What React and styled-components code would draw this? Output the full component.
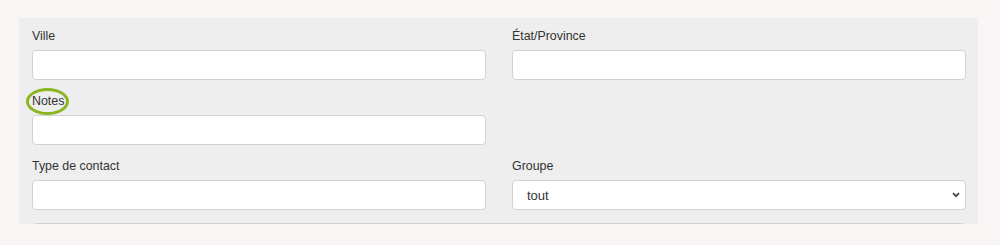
import React from 'react';
import styled, { createGlobalStyle } from 'styled-components';

const GlobalStyle = createGlobalStyle`
  html, body {
    margin: 0;
    padding: 0;
    background: #faf5f5;
    font-family: 'Liberation Sans', Arial, sans-serif;
  }
`;

const Page = styled.div`
  padding: 18px 22px 0 19px;
  height: 245px;
  box-sizing: border-box;
`;

const Panel = styled.div`
  background: #eeeeee;
  height: 206px;
  overflow: hidden;
  box-sizing: border-box;
  padding: 10px 12px 0 13px;
`;

const Grid = styled.div`
  display: grid;
  grid-template-columns: 454px 454px;
  column-gap: 26px;
`;

const Field = styled.div`
  display: flex;
  flex-direction: column;
  margin-bottom: 13px;
  grid-column: ${(p) => (p.$full ? '1 / -1' : 'auto')};
`;

const Label = styled.label`
  position: relative;
  align-self: flex-start;
  font-size: 12.4px;
  line-height: 17px;
  color: #333;
  margin-bottom: 5px;
`;

const Ring = styled.span`
  position: absolute;
  left: -6px;
  top: -5px;
  width: 43px;
  height: 27px;
  box-sizing: border-box;
  border: 3px solid #8db51f;
  border-radius: 50%;
  pointer-events: none;
`;

const Input = styled.input`
  box-sizing: border-box;
  height: 30px;
  width: 100%;
  border: 1px solid #d2d2d2;
  border-radius: 4px;
  background: #fff;
  padding: 0 14px;
  font-family: inherit;
  font-size: 13px;
  color: #333;
  outline: none;
`;

const SelectWrap = styled.div`
  position: relative;
`;

const Select = styled.select`
  box-sizing: border-box;
  appearance: none;
  height: 30px;
  width: 100%;
  border: 1px solid #d2d2d2;
  border-radius: 4px;
  background: #fff;
  padding: 0 14px;
  font-family: inherit;
  font-size: 13px;
  color: #333;
  outline: none;
`;

const Chevron = styled.svg`
  position: absolute;
  right: 6px;
  top: 12px;
  pointer-events: none;
`;

const Notes = styled.textarea`
  box-sizing: border-box;
  height: 60px;
  width: 100%;
  border: 1px solid #d2d2d2;
  border-radius: 4px;
  background: #fff;
  resize: none;
`;

export default function App() {
  return (
    <>
      <GlobalStyle />
      <Page>
        <Panel>
          <Grid>
            <Field>
              <Label>Ville</Label>
              <Input type="text" />
            </Field>
            <Field>
              <Label>État/Province</Label>
              <Input type="text" />
            </Field>
            <Field>
              <Label>
                Notes
                <Ring />
              </Label>
              <Input type="text" />
            </Field>
            <div />
            <Field>
              <Label>Type de contact</Label>
              <Input type="text" />
            </Field>
            <Field>
              <Label>Groupe</Label>
              <SelectWrap>
                <Select defaultValue="tout">
                  <option value="tout">tout</option>
                </Select>
                <Chevron width="8" height="6" viewBox="0 0 8 6">
                  <path d="M1 1.2 L4 4.2 L7 1.2" fill="none" stroke="#444" strokeWidth="1.8" />
                </Chevron>
              </SelectWrap>
            </Field>
            <Field $full>
              <Notes />
            </Field>
          </Grid>
        </Panel>
      </Page>
    </>
  );
}
